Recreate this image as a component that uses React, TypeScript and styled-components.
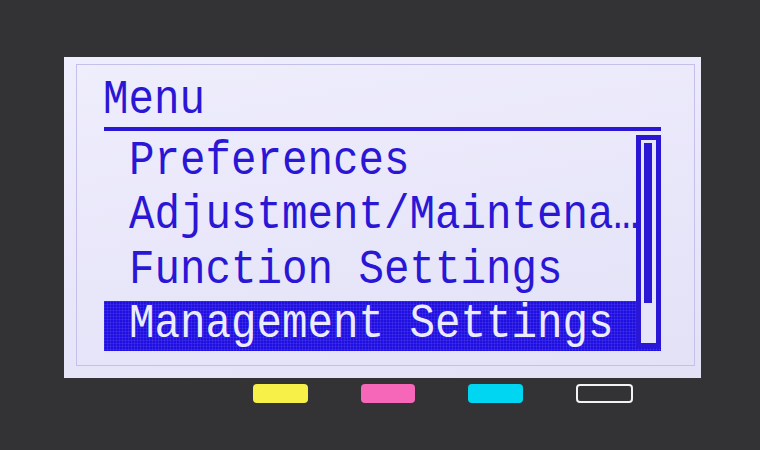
import styled, { createGlobalStyle } from 'styled-components'

const GlobalStyle = createGlobalStyle`
  html, body {
    margin: 0;
    padding: 0;
    background: #333235;
  }
`

const Stage = styled.div`
  width: 760px;
  height: 450px;
  background: #333235;
  padding: 57px 0 0 64px;
  box-sizing: border-box;
  display: flex;
  flex-direction: column;
`

const Screen = styled.div`
  width: 637px;
  height: 321px;
  box-sizing: border-box;
  padding: 7px 6px 12px 12px;
  background: linear-gradient(170deg, #efeefc 0%, #e8e6f9 55%, #e3e1f6 100%);
`

const Frame = styled.div`
  height: 100%;
  box-sizing: border-box;
  border: 1px solid #c4c0ea;
  padding: 0 33px 0 27px;
  display: flex;
  flex-direction: column;
`

const Header = styled.div`
  height: 66px;
  display: flex;
  align-items: flex-end;
  padding-bottom: 5px;
  border-bottom: 4px solid #2a17d6;
  box-sizing: border-box;
`

const Glyphs = styled.span`
  display: inline-block;
  font-family: 'Liberation Mono', 'DejaVu Sans Mono', monospace;
  font-size: 42.5px;
  line-height: 1;
  white-space: pre;
  transform: scaleY(1.15);
  transform-origin: 50% 58%;
`

const Title = styled(Glyphs)`
  color: #2a17d6;
  margin-left: -1px;
`

const List = styled.div`
  position: relative;
  margin-top: 6px;
  display: flex;
  flex-direction: column;
  gap: 4.5px;
`

const Row = styled.div<{ $selected?: boolean }>`
  height: 50px;
  display: flex;
  align-items: center;
  padding-left: 25px;
  color: ${p => (p.$selected ? '#ecebfc' : '#2a17d6')};
  background-color: ${p => (p.$selected ? '#1f0fe2' : 'transparent')};
  background-image: ${p =>
    p.$selected
      ? 'linear-gradient(rgba(255,255,255,0.07) 1px, transparent 1px), linear-gradient(90deg, rgba(255,255,255,0.07) 1px, transparent 1px)'
      : 'none'};
  background-size: 3px 3px;
`

const Scrollbar = styled.div`
  position: absolute;
  top: -2px;
  right: 0;
  width: 25px;
  height: 213px;
  box-sizing: border-box;
  border: 5px solid #2a17d6;
  padding: 3px;
  background: #e6e4f8;
`

const Thumb = styled.div`
  width: 8px;
  height: 160px;
  background: #2a17d6;
`

const Keys = styled.div`
  display: flex;
  gap: 53px;
  margin: 6px 0 0 189px;
`

const Key = styled.div<{ $color?: string; $w: number }>`
  width: ${p => p.$w}px;
  height: 19px;
  box-sizing: border-box;
  border-radius: 4px;
  background: ${p => p.$color ?? 'transparent'};
  border: ${p => (p.$color ? 'none' : '2px solid #f2f2f2')};
`

const items = ['Preferences', 'Adjustment/Maintena…', 'Function Settings', 'Management Settings']

export default function App() {
  return (
    <Stage>
      <GlobalStyle />
      <Screen>
        <Frame>
          <Header>
            <Title>Menu</Title>
          </Header>
          <List>
            {items.map((label, i) => (
              <Row key={label} $selected={i === 3}>
                <Glyphs>{label}</Glyphs>
              </Row>
            ))}
            <Scrollbar>
              <Thumb />
            </Scrollbar>
          </List>
        </Frame>
      </Screen>
      <Keys>
        <Key $w={55} $color="#f6f048" />
        <Key $w={54} $color="#f767b9" />
        <Key $w={55} $color="#00d6f2" />
        <Key $w={57} />
      </Keys>
    </Stage>
  )
}
